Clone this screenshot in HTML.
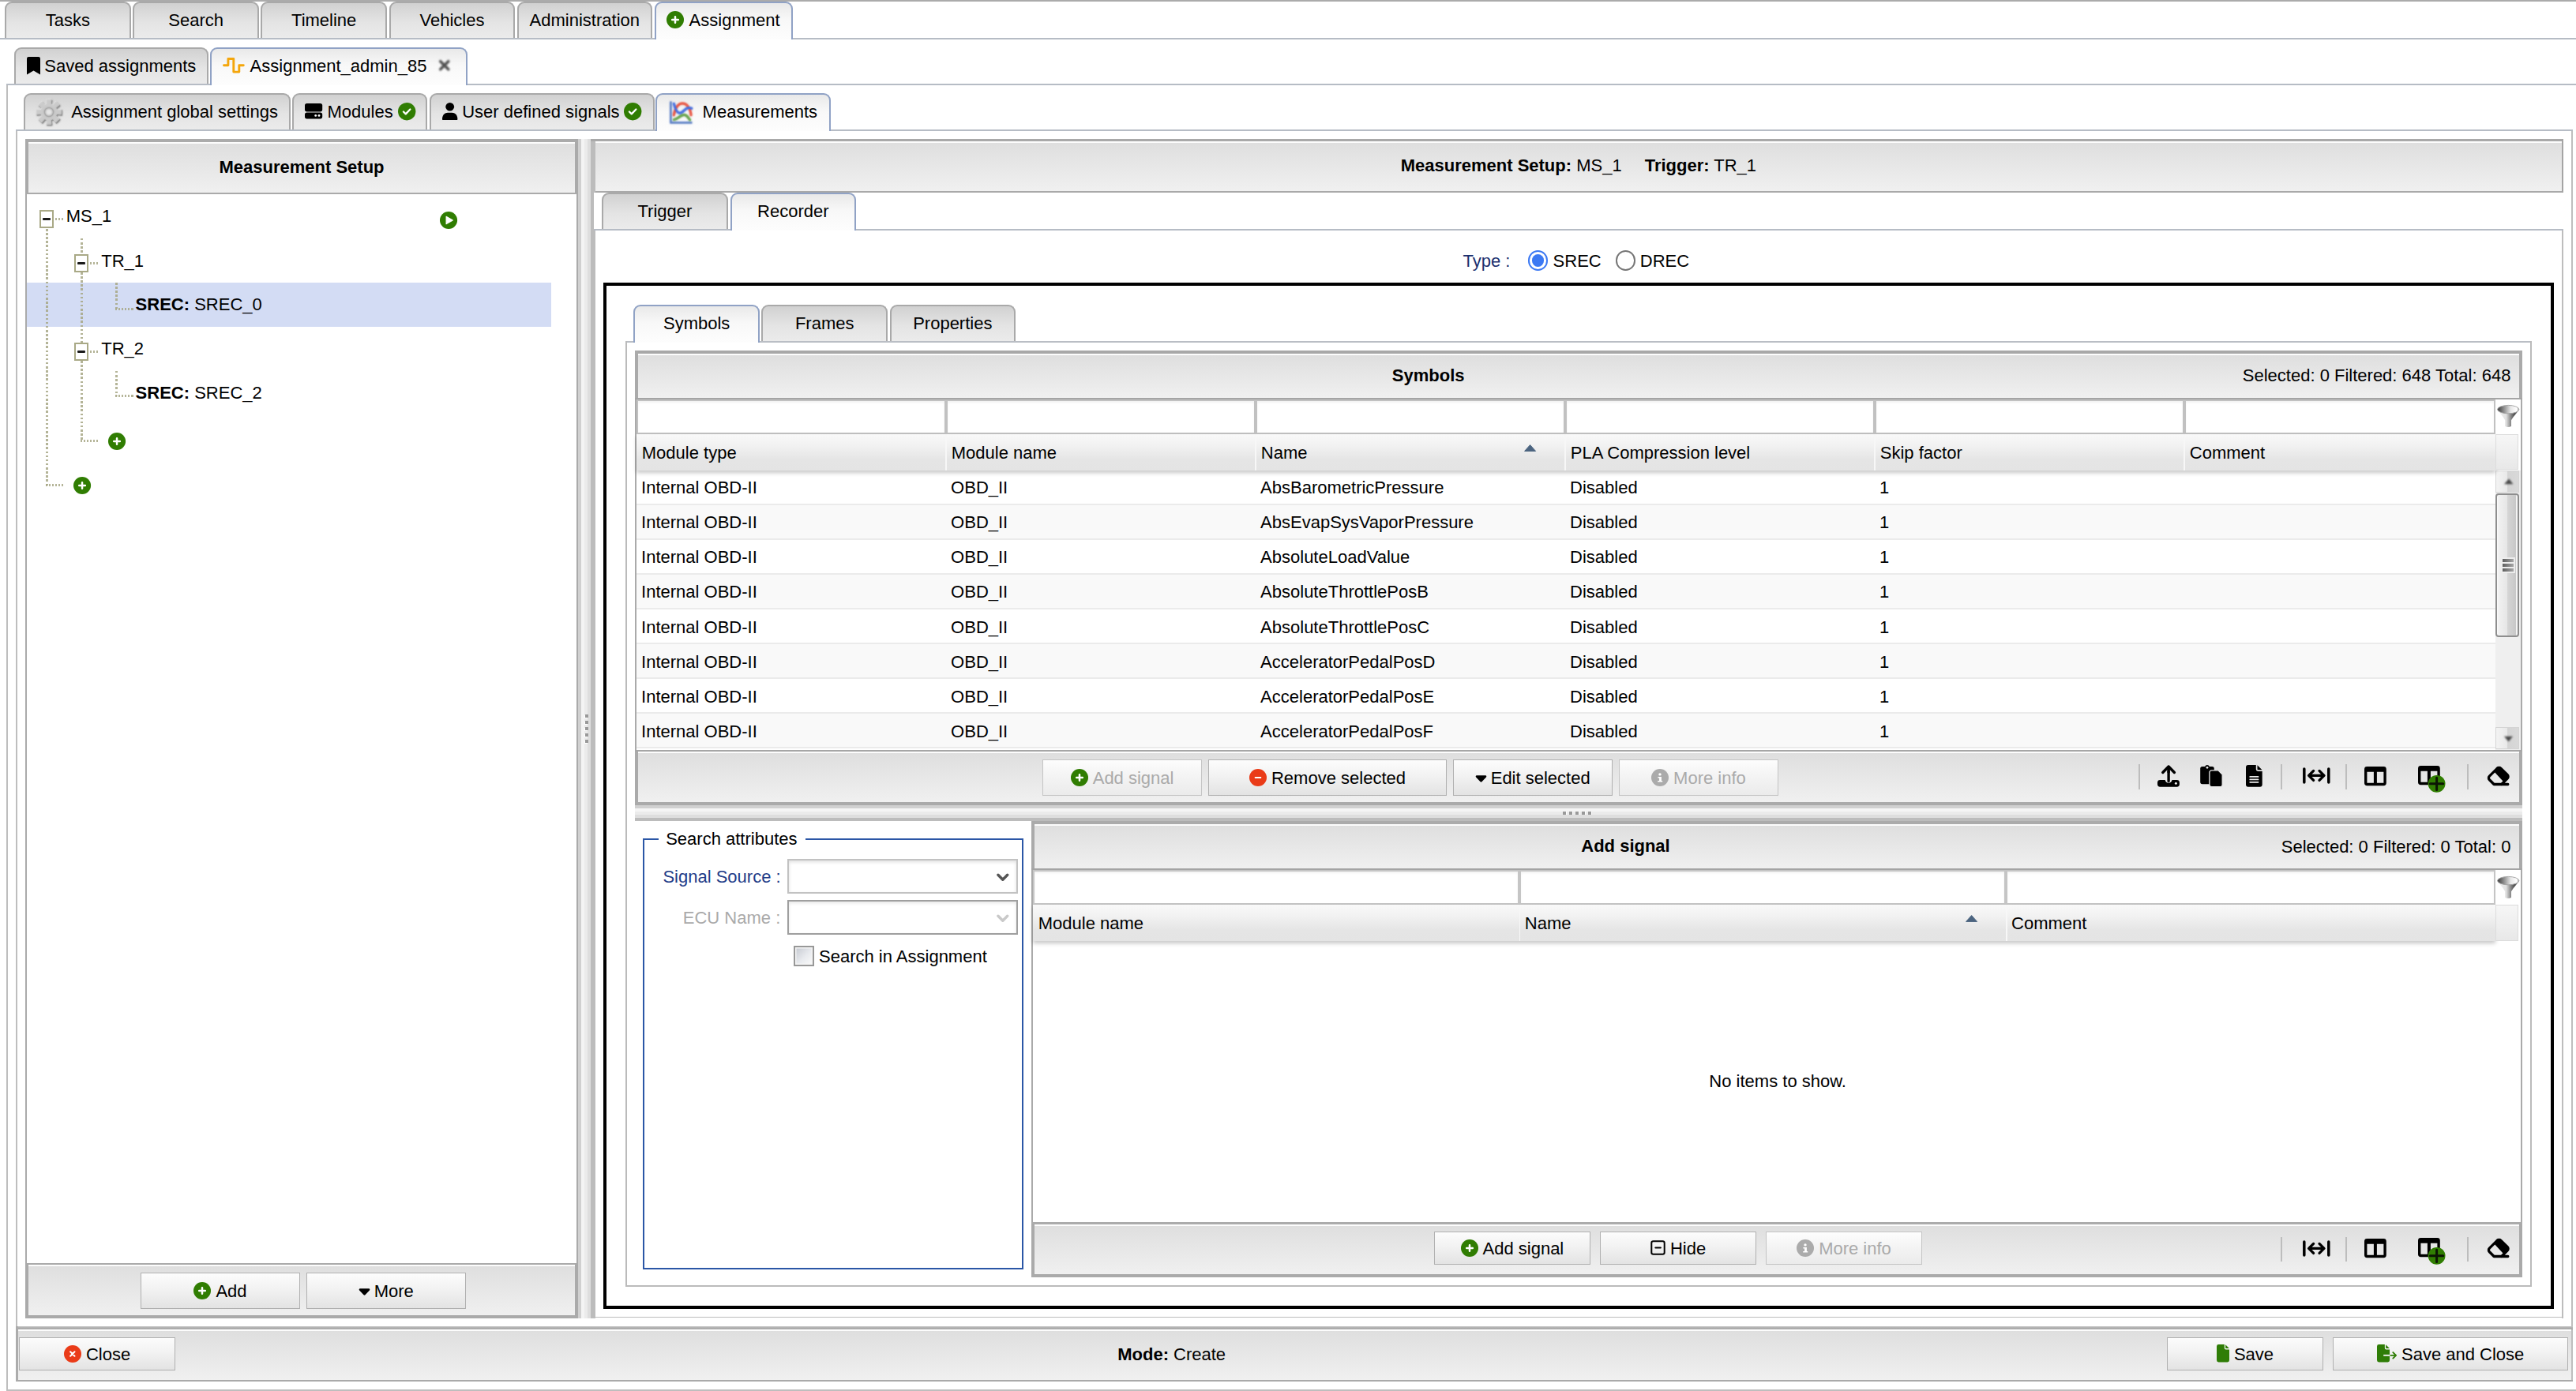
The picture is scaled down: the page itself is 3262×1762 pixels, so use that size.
<!DOCTYPE html>
<html><head><meta charset="utf-8"><title>Assignment</title>
<style>
html,body{margin:0;padding:0}
body{width:3262px;height:1762px;overflow:hidden;background:#fff;font-family:"Liberation Sans",sans-serif;font-size:22px;color:#000;position:relative}
.a{position:absolute;box-sizing:border-box}
svg{display:block;overflow:visible}
.tab{position:absolute;box-sizing:border-box;height:46px;border:2px solid #a9a9a9;border-bottom:none;border-radius:9px 9px 0 0;background:linear-gradient(#d1d1d1,#e4e4e4 55%,#ebebeb);white-space:nowrap}
.tab.on{height:48px;border-color:#90a2c5;background:linear-gradient(#e9e9e9,#f8f8f8 45%,#fdfdfd)}
.t{position:absolute;white-space:nowrap;line-height:26px;height:26px}
.b{font-weight:bold}
.ln{position:absolute;background:#b6bcc5}
.g{position:absolute;background:#aaaaaa}
.hdr{position:absolute;background:linear-gradient(#dedede,#e7e7e7 50%,#f0f0f0);box-shadow:inset 0 2px 0 #fcfcfc}
.btn{position:absolute;box-sizing:border-box;border:1px solid #b0b0b0;background:linear-gradient(#fcfcfc,#f2f2f2 45%,#e3e3e3);display:flex;align-items:center;justify-content:center;white-space:nowrap;line-height:26px}
.btn.dis{color:#aaaaaa;border-color:#c4c4c4;background:linear-gradient(#fdfdfd,#f4f4f4 45%,#ebebeb)}
.btn svg{flex:none;margin-right:6px}
.btn span{position:relative;top:1.2px}
.colh{position:absolute;background:linear-gradient(#f9f9f9,#f2f2f2 30%,#e5e5e5 70%,#e4e4e4);box-shadow:0 3px 5px rgba(0,0,0,.22)}
.fin{position:absolute;background:#fff;box-sizing:border-box;box-shadow:inset 0 2px 3px rgba(0,0,0,.05)}
.row{position:absolute;box-sizing:border-box;border-bottom:2px solid #ebebeb}
.dot{position:absolute}
</style></head>
<body>
<div class="a" style="left:0;top:0;width:3262px;height:2px;background:#ababab"></div><div class="ln" style="left:0;top:48px;width:3262px;height:2px"></div><div class="tab" style="left:6.2px;top:2px;width:159.6px"><div class="t" style="left:0;right:0;top:9px;text-align:center">Tasks</div></div><div class="tab" style="left:168.4px;top:2px;width:159.6px"><div class="t" style="left:0;right:0;top:9px;text-align:center">Search</div></div><div class="tab" style="left:330.4px;top:2px;width:159.6px"><div class="t" style="left:0;right:0;top:9px;text-align:center">Timeline</div></div><div class="tab" style="left:492.7px;top:2px;width:159.6px"><div class="t" style="left:0;right:0;top:9px;text-align:center">Vehicles</div></div><div class="tab" style="left:654.6px;top:2px;width:171.4px"><div class="t" style="left:0;right:0;top:9px;text-align:center">Administration</div></div><div class="tab on" style="left:828.8px;top:2px;width:175.2px"><svg class="a" style="left:13.4px;top:10.0px" width="22" height="22" viewBox="0 0 22 22"><circle cx="11" cy="11" r="11" fill="#307d02"/><path d="M11 7.200v7.600M7.200 11h7.600" stroke="#fff" stroke-width="2.500" stroke-linecap="round" fill="none"/></svg><div class="t" style="left:41.80000000000007px;top:9px">Assignment</div></div><div class="ln" style="left:8.3px;top:106.2px;width:3254px;height:2px"></div><div class="ln" style="left:8.3px;top:108px;width:2px;height:1654px;background:#bebebe"></div><div class="ln" style="left:8.3px;top:1759.8px;width:3254px;height:2.2px;background:#bebebe"></div><div class="tab" style="left:18.3px;top:60.3px;width:246.2px"><svg class="a" style="left:13.6px;top:9.3px" width="17" height="22.4" viewBox="0 0 17 22.4"><path d="M0 2.2Q0 0 2.2 0h12.6Q17 0 17 2.2V22.4L8.5 17.4 0 22.4z" fill="#000"/></svg><div class="t" style="left:36.0px;top:9px">Saved assignments</div></div><div class="tab on" style="left:266.3px;top:60.3px;width:325.4px"><svg class="a" style="left:13.5px;top:10.6px" width="28" height="19.7" viewBox="0 0 28 19.7"><path d="M1.500 9.700H6.900V1.500H13.800V18.100H20.800V9.700H26.300" fill="none" stroke="#f4a60c" stroke-width="2.900" stroke-linecap="round" stroke-linejoin="round"/></svg><div class="t" style="left:48.30000000000001px;top:9px">Assignment_admin_85</div><svg class="a" style="left:286.7px;top:13.0px" width="15.5" height="15.5" viewBox="0 0 15.5 15.5"><path d="M2.700 2.700l10.100 10.100M12.800 2.700L2.700 12.800" stroke="#505050" stroke-width="3.500" stroke-linecap="round" fill="none" style="filter:blur(.9px)"/></svg></div><div class="ln" style="left:20.3px;top:164px;width:3238px;height:2px"></div><div class="ln" style="left:20.3px;top:166px;width:2.2px;height:1584px;background:#bebebe"></div><div class="ln" style="left:3255.8px;top:166px;width:2.2px;height:1584px;background:#bebebe"></div><div class="tab" style="left:30.1px;top:118.4px;width:337.8px"><svg class="a" style="left:13.9px;top:6.1px" width="32" height="32" viewBox="0 0 32 32"><g style="filter:blur(.85px)"><path d="M13.62 6.08 L13.04 0.48 L18.96 0.48 L18.38 6.08 L21.33 7.30 L24.88 2.93 L29.07 7.12 L24.70 10.67 L25.92 13.62 L31.52 13.04 L31.52 18.96 L25.92 18.38 L24.70 21.33 L29.07 24.88 L24.88 29.07 L21.33 24.70 L18.38 25.92 L18.96 31.52 L13.04 31.52 L13.62 25.92 L10.67 24.70 L7.12 29.07 L2.93 24.88 L7.30 21.33 L6.08 18.38 L0.48 18.96 L0.48 13.04 L6.08 13.62 L7.30 10.67 L2.93 7.12 L7.12 2.93 L10.67 7.30Z" transform="translate(.8 1)" fill="#767676" stroke="#767676" stroke-width="1.4" stroke-linejoin="round"/><path d="M13.62 6.08 L13.04 0.48 L18.96 0.48 L18.38 6.08 L21.33 7.30 L24.88 2.93 L29.07 7.12 L24.70 10.67 L25.92 13.62 L31.52 13.04 L31.52 18.96 L25.92 18.38 L24.70 21.33 L29.07 24.88 L24.88 29.07 L21.33 24.70 L18.38 25.92 L18.96 31.52 L13.04 31.52 L13.62 25.92 L10.67 24.70 L7.12 29.07 L2.93 24.88 L7.30 21.33 L6.08 18.38 L0.48 18.96 L0.48 13.04 L6.08 13.62 L7.30 10.67 L2.93 7.12 L7.12 2.93 L10.67 7.30Z" transform="translate(-.4 -.5)" fill="#e6e6e6" stroke="#e6e6e6" stroke-width="1" stroke-linejoin="round"/><path d="M13.62 6.08 L13.04 0.48 L18.96 0.48 L18.38 6.08 L21.33 7.30 L24.88 2.93 L29.07 7.12 L24.70 10.67 L25.92 13.62 L31.52 13.04 L31.52 18.96 L25.92 18.38 L24.70 21.33 L29.07 24.88 L24.88 29.07 L21.33 24.70 L18.38 25.92 L18.96 31.52 L13.04 31.52 L13.62 25.92 L10.67 24.70 L7.12 29.07 L2.93 24.88 L7.30 21.33 L6.08 18.38 L0.48 18.96 L0.48 13.04 L6.08 13.62 L7.30 10.67 L2.93 7.12 L7.12 2.93 L10.67 7.30Z" fill="#cbcbcb" stroke="#cbcbcb" stroke-width=".8" stroke-linejoin="round"/><circle cx="16" cy="16" r="5.6" fill="#d2d2d2" stroke="#9c9c9c" stroke-width="1.5"/><circle cx="16" cy="16" r="3.3" fill="#e6e6e6"/></g><g opacity=".4"><path d="M13.62 6.08 L13.04 0.48 L18.96 0.48 L18.38 6.08 L21.33 7.30 L24.88 2.93 L29.07 7.12 L24.70 10.67 L25.92 13.62 L31.52 13.04 L31.52 18.96 L25.92 18.38 L24.70 21.33 L29.07 24.88 L24.88 29.07 L21.33 24.70 L18.38 25.92 L18.96 31.52 L13.04 31.52 L13.62 25.92 L10.67 24.70 L7.12 29.07 L2.93 24.88 L7.30 21.33 L6.08 18.38 L0.48 18.96 L0.48 13.04 L6.08 13.62 L7.30 10.67 L2.93 7.12 L7.12 2.93 L10.67 7.30Z" transform="translate(.8 1)" fill="#767676" stroke="#767676" stroke-width="1.4" stroke-linejoin="round"/><path d="M13.62 6.08 L13.04 0.48 L18.96 0.48 L18.38 6.08 L21.33 7.30 L24.88 2.93 L29.07 7.12 L24.70 10.67 L25.92 13.62 L31.52 13.04 L31.52 18.96 L25.92 18.38 L24.70 21.33 L29.07 24.88 L24.88 29.07 L21.33 24.70 L18.38 25.92 L18.96 31.52 L13.04 31.52 L13.62 25.92 L10.67 24.70 L7.12 29.07 L2.93 24.88 L7.30 21.33 L6.08 18.38 L0.48 18.96 L0.48 13.04 L6.08 13.62 L7.30 10.67 L2.93 7.12 L7.12 2.93 L10.67 7.30Z" transform="translate(-.4 -.5)" fill="#e6e6e6" stroke="#e6e6e6" stroke-width="1" stroke-linejoin="round"/><path d="M13.62 6.08 L13.04 0.48 L18.96 0.48 L18.38 6.08 L21.33 7.30 L24.88 2.93 L29.07 7.12 L24.70 10.67 L25.92 13.62 L31.52 13.04 L31.52 18.96 L25.92 18.38 L24.70 21.33 L29.07 24.88 L24.88 29.07 L21.33 24.70 L18.38 25.92 L18.96 31.52 L13.04 31.52 L13.62 25.92 L10.67 24.70 L7.12 29.07 L2.93 24.88 L7.30 21.33 L6.08 18.38 L0.48 18.96 L0.48 13.04 L6.08 13.62 L7.30 10.67 L2.93 7.12 L7.12 2.93 L10.67 7.30Z" fill="#cbcbcb" stroke="#cbcbcb" stroke-width=".8" stroke-linejoin="round"/><circle cx="16" cy="16" r="5.6" fill="#d2d2d2" stroke="#9c9c9c" stroke-width="1.5"/><circle cx="16" cy="16" r="3.3" fill="#e6e6e6"/></g></svg><div class="t" style="left:58.1px;top:9px">Assignment global settings</div></div><div class="tab" style="left:370.3px;top:118.4px;width:171.2px"><svg class="a" style="left:13.9px;top:10.7px" width="22.2" height="19.4" viewBox="0 0 22.2 19.4"><rect x="0" y="0" width="22.2" height="10.4" rx="2.6" fill="#000"/><rect x="0" y="11.4" width="22.2" height="8" rx="2.6" fill="#000"/><circle cx="13.7" cy="15.4" r="1.4" fill="#fff"/><circle cx="18" cy="15.4" r="1.4" fill="#fff"/></svg><div class="t" style="left:42.19999999999999px;top:9px">Modules</div><svg class="a" style="left:131.3px;top:9.2px" width="22.4" height="22.4" viewBox="0 0 22 22"><circle cx="11" cy="11" r="11" fill="#307d02"/><path d="M6.800 11.300l2.800 2.800 5.500-5.700" stroke="#fff" stroke-width="2.300" stroke-linecap="round" stroke-linejoin="round" fill="none"/></svg></div><div class="tab" style="left:544.4px;top:118.4px;width:284.2px"><svg class="a" style="left:13.5px;top:9.3px" width="19.4" height="22" viewBox="0 0 19.4 22.8" preserveAspectRatio="none"><circle cx="9.7" cy="5.4" r="5.4" fill="#000"/><path d="M0 21.8C0 16 3.2 13.2 7 13.2h5.4c3.8 0 7 2.8 7 8.6 0 .6-.4 1-1 1H1c-.6 0-1-.4-1-1z" fill="#000"/></svg><div class="t" style="left:38.80000000000007px;top:9px">User defined signals</div><svg class="a" style="left:244.1px;top:9.2px" width="22.4" height="22.4" viewBox="0 0 22 22"><circle cx="11" cy="11" r="11" fill="#307d02"/><path d="M6.800 11.300l2.800 2.800 5.500-5.700" stroke="#fff" stroke-width="2.300" stroke-linecap="round" stroke-linejoin="round" fill="none"/></svg></div><div class="tab on" style="left:830.2px;top:118.4px;width:221.6px"><svg class="a" style="left:15.4px;top:7.2px" width="29" height="28.5" viewBox="0 0 29 28.5"><g style="filter:blur(.85px)"><g fill="none" stroke-linecap="round"><path d="M5.300 17.900C6.500 9 10.800 3 16.100 3 21.600 3 26 8.500 27.100 17.700" stroke="#e8503c" stroke-width="3"/><path d="M5.300 3.200C6.500 8.200 9 15.200 12.700 15.200 17 15.200 19.500 8.800 24 8.400L27.800 9.300" stroke="#3f6ae0" stroke-width="3"/><path d="M5.400 23.400C10 23.400 13 17.600 18.400 17.600 22.500 17.600 23.500 22 25.700 23.800" stroke="#62a046" stroke-width="3"/><path d="M1.400 0.400V27.300H28.400" stroke="#4a72c0" stroke-width="2.200" stroke-linecap="butt" stroke-linejoin="miter"/></g></g><g opacity=".35"><g fill="none" stroke-linecap="round"><path d="M5.300 17.900C6.500 9 10.800 3 16.100 3 21.600 3 26 8.500 27.100 17.700" stroke="#e8503c" stroke-width="3"/><path d="M5.300 3.200C6.500 8.200 9 15.200 12.700 15.200 17 15.200 19.500 8.800 24 8.400L27.800 9.300" stroke="#3f6ae0" stroke-width="3"/><path d="M5.400 23.400C10 23.400 13 17.600 18.400 17.600 22.500 17.600 23.500 22 25.700 23.800" stroke="#62a046" stroke-width="3"/><path d="M1.400 0.400V27.300H28.400" stroke="#4a72c0" stroke-width="2.200" stroke-linecap="butt" stroke-linejoin="miter"/></g></g></svg><div class="t" style="left:57.39999999999998px;top:9px">Measurements</div></div>
<div class="g" style="left:32px;top:176px;width:700.2px;height:3.8px;background:#ababab"></div><div class="hdr" style="left:35.8px;top:179.8px;width:692.4px;height:64.2px"></div><div class="g" style="left:32px;top:176px;width:4px;height:70px"></div><div class="g" style="left:728.2px;top:176px;width:4px;height:70px"></div><div class="g" style="left:32px;top:244px;width:700.2px;height:2.2px"></div><div class="g" style="left:32px;top:246px;width:2.2px;height:1354px"></div><div class="g" style="left:730px;top:246px;width:2.2px;height:1354px"></div><div class="t b" style="left:36px;width:692px;top:198.6px;text-align:center">Measurement Setup</div><div class="a" style="left:34.2px;top:358.1px;width:663.8px;height:55.7px;background:#d3dcf4"></div><div class="dot" style="left:57.7px;top:290px;width:3px;height:325.4px;background:repeating-linear-gradient(to bottom,#a7a785 0,#a7a785 2.5px,transparent 2.5px,transparent 5.12px);opacity:.85"></div><div class="dot" style="left:57.7px;top:612.7px;height:3px;width:22.5px;background:repeating-linear-gradient(to right,#a7a785 0,#a7a785 2.3px,transparent 2.3px,transparent 4.04px);opacity:.85"></div><div class="dot" style="left:101.6px;top:302px;width:3px;height:20.5px;background:repeating-linear-gradient(to bottom,#a7a785 0,#a7a785 2.5px,transparent 2.5px,transparent 5.12px);opacity:.85"></div><div class="dot" style="left:101.6px;top:345.2px;width:3px;height:89.4px;background:repeating-linear-gradient(to bottom,#a7a785 0,#a7a785 2.5px,transparent 2.5px,transparent 5.12px);opacity:.85"></div><div class="dot" style="left:101.6px;top:457.2px;width:3px;height:102.0px;background:repeating-linear-gradient(to bottom,#a7a785 0,#a7a785 2.5px,transparent 2.5px,transparent 5.12px);opacity:.85"></div><div class="dot" style="left:101.6px;top:556.5px;height:3px;width:23.0px;background:repeating-linear-gradient(to right,#a7a785 0,#a7a785 2.3px,transparent 2.3px,transparent 4.04px);opacity:.85"></div><div class="dot" style="left:145.7px;top:358.2px;width:3px;height:34.4px;background:repeating-linear-gradient(to bottom,#a7a785 0,#a7a785 2.5px,transparent 2.5px,transparent 5.12px);opacity:.85"></div><div class="dot" style="left:145.7px;top:390px;height:3px;width:23.1px;background:repeating-linear-gradient(to right,#a7a785 0,#a7a785 2.3px,transparent 2.3px,transparent 4.04px);opacity:.85"></div><div class="dot" style="left:145.7px;top:470.3px;width:3px;height:32.0px;background:repeating-linear-gradient(to bottom,#a7a785 0,#a7a785 2.5px,transparent 2.5px,transparent 5.12px);opacity:.85"></div><div class="dot" style="left:145.7px;top:499.8px;height:3px;width:23.1px;background:repeating-linear-gradient(to right,#a7a785 0,#a7a785 2.3px,transparent 2.3px,transparent 4.04px);opacity:.85"></div><div class="dot" style="left:69.8px;top:276.2px;height:3px;width:10.4px;background:repeating-linear-gradient(to right,#a7a785 0,#a7a785 2.3px,transparent 2.3px,transparent 4.04px);opacity:.85"></div><div class="dot" style="left:113.8px;top:332.2px;height:3px;width:10.6px;background:repeating-linear-gradient(to right,#a7a785 0,#a7a785 2.3px,transparent 2.3px,transparent 4.04px);opacity:.85"></div><div class="dot" style="left:113.8px;top:444.2px;height:3px;width:10.6px;background:repeating-linear-gradient(to right,#a7a785 0,#a7a785 2.3px,transparent 2.3px,transparent 4.04px);opacity:.85"></div><div class="a" style="left:50px;top:266.3px;width:18px;height:23.2px;border:2.4px solid #a9a986;background:#fff"></div><div class="a" style="left:54.2px;top:275.7px;width:9.6px;height:3.4px;background:#1a1a1a;border-radius:1px"></div><div class="a" style="left:94px;top:322.1px;width:18px;height:23.2px;border:2.4px solid #a9a986;background:#fff"></div><div class="a" style="left:98.2px;top:331.5px;width:9.6px;height:3.4px;background:#1a1a1a;border-radius:1px"></div><div class="a" style="left:94px;top:434.2px;width:18px;height:23.2px;border:2.4px solid #a9a986;background:#fff"></div><div class="a" style="left:98.2px;top:443.59999999999997px;width:9.6px;height:3.4px;background:#1a1a1a;border-radius:1px"></div><div class="t" style="left:83.8px;top:261.4px">MS_1</div><div class="t" style="left:128.3px;top:317.5px">TR_1</div><div class="t" style="left:171.6px;top:373.3px"><b>SREC:</b> SREC_0</div><div class="t" style="left:128.3px;top:429.4px">TR_2</div><div class="t" style="left:171.6px;top:485.0px"><b>SREC:</b> SREC_2</div><svg class="a" style="left:557px;top:267.6px" width="22.1" height="22.1" viewBox="0 0 22 22" ><circle cx="11" cy="11" r="11" fill="#307d02"/><path d="M8 6.2v9.6l8.3-4.8z" fill="#fff" stroke="#fff" stroke-width="1" stroke-linejoin="round"/></svg><svg class="a" style="left:137.1px;top:547.9px" width="22.1" height="22.1" viewBox="0 0 22 22" ><circle cx="11" cy="11" r="11" fill="#307d02"/><path d="M11 7.200v7.600M7.200 11h7.600" stroke="#fff" stroke-width="2.500" stroke-linecap="round" fill="none"/></svg><svg class="a" style="left:92.8px;top:603.6px" width="22.1" height="22.1" viewBox="0 0 22 22" ><circle cx="11" cy="11" r="11" fill="#307d02"/><path d="M11 7.200v7.600M7.200 11h7.600" stroke="#fff" stroke-width="2.500" stroke-linecap="round" fill="none"/></svg><div class="g" style="left:32px;top:1600px;width:700.2px;height:2px"></div><div class="hdr" style="left:35.8px;top:1602px;width:692.4px;height:63.8px"></div><div class="g" style="left:32px;top:1599.6px;width:4px;height:69.8px"></div><div class="g" style="left:728.2px;top:1599.6px;width:4px;height:69.8px"></div><div class="g" style="left:32px;top:1665.8px;width:700.2px;height:4px"></div><div class="btn" style="left:178px;top:1612.3px;width:202px;height:45.8px"><svg width="22" height="22" viewBox="0 0 22 22" style=""><circle cx="11" cy="11" r="11" fill="#307d02"/><path d="M11 7.200v7.600M7.200 11h7.600" stroke="#fff" stroke-width="2.500" stroke-linecap="round" fill="none"/></svg><span>Add</span></div><div class="btn" style="left:388px;top:1612.3px;width:202px;height:45.8px"><svg width="15" height="9" viewBox="0 0 15 9" style="margin-top:2.600px;margin-right:4.600px"><path d="M2 1.500h11l-5.500 5.800z" fill="#000" stroke="#000" stroke-width="2.600" stroke-linejoin="round"/></svg><span>More</span></div><div class="a" style="left:732.1px;top:176px;width:15.9px;height:1493.5px;background:linear-gradient(to right,#d0d0d0 0,#d0d0d0 3.5px,#f4f4f4 4px,#f4f4f4 7.8px,#ebebeb 8.2px,#ebebeb 11.9px,#dedede 12.3px,#dedede 100%)"></div><div class="a" style="left:740.2px;top:905.6px;width:4px;height:4px;background:#fff"></div><div class="a" style="left:741px;top:904.9px;width:4px;height:3.9px;background:#999"></div><div class="a" style="left:740.2px;top:913.6px;width:4px;height:4px;background:#fff"></div><div class="a" style="left:741px;top:912.9px;width:4px;height:3.9px;background:#999"></div><div class="a" style="left:740.2px;top:921.6px;width:4px;height:4px;background:#fff"></div><div class="a" style="left:741px;top:920.9px;width:4px;height:3.9px;background:#999"></div><div class="a" style="left:740.2px;top:929.6px;width:4px;height:4px;background:#fff"></div><div class="a" style="left:741px;top:928.9px;width:4px;height:3.9px;background:#999"></div><div class="a" style="left:740.2px;top:937.6px;width:4px;height:4px;background:#fff"></div><div class="a" style="left:741px;top:936.9px;width:4px;height:3.9px;background:#999"></div>
<div class="a" style="left:747.9px;top:176px;width:6px;height:1493.5px;background:#bcbcbc"></div><div class="hdr" style="left:753.9px;top:178.5px;width:2489.7px;height:63.6px"></div><div class="g" style="left:747.9px;top:176px;width:2498px;height:2.8px;background:#a9a9a9"></div><div class="g" style="left:753.9px;top:242px;width:2492px;height:2px;background:#a9a9a9"></div><div class="a" style="left:752px;top:244px;width:2px;height:46px;background:#fff"></div><div class="g" style="left:3243.6px;top:176px;width:2.4px;height:68px;background:#a4a4a4"></div><div class="t" style="left:753.9px;width:2490px;top:196.5px;text-align:center;word-spacing:0"><b>Measurement Setup:</b> MS_1<span style="display:inline-block;width:29px"></span><b>Trigger:</b> TR_1</div><div class="ln" style="left:3244px;top:290px;width:2px;height:1379.5px;background:#bdbdbd"></div><div class="ln" style="left:753.9px;top:1667.6px;width:2492px;height:1.9px;background:#bdbdbd"></div><div class="ln" style="left:752px;top:290px;width:2494px;height:2px"></div><div class="tab" style="left:762.1px;top:243.9px;width:159.7px"><div class="t" style="left:0;right:0;top:9.299999999999999px;text-align:center">Trigger</div></div><div class="tab on" style="left:924.6px;top:243.9px;width:159.4px"><div class="t" style="left:0;right:0;top:9.299999999999999px;text-align:center">Recorder</div></div><div class="t" style="left:1852.5px;top:317.6px;color:#1b2f6e">Type :</div><div class="a" style="left:1934.8px;top:317.2px;width:25.6px;height:25.6px;border-radius:50%;border:2.2px solid #3c79f3;background:#fff"></div><div class="a" style="left:1939.7px;top:322.1px;width:15.8px;height:15.8px;border-radius:50%;background:#3c79f3"></div><div class="t" style="left:1966.6px;top:317.6px">SREC</div><div class="a" style="left:2045.9px;top:317.2px;width:25.6px;height:25.6px;border-radius:50%;border:2.2px solid #767676;background:#fff"></div><div class="t" style="left:2076.8px;top:317.6px">DREC</div><div class="a" style="left:764.1px;top:358.1px;width:2469.9px;height:1300.1px;border:4px solid #000"></div><div class="ln" style="left:792.2px;top:432.2px;width:2413.8px;height:2px;background:#babec5"></div><div class="ln" style="left:792.2px;top:432.2px;width:2px;height:1197.8px;background:#bbb"></div><div class="ln" style="left:3204px;top:432.2px;width:2px;height:1197.8px;background:#bbb"></div><div class="ln" style="left:792.2px;top:1628px;width:2413.8px;height:2px;background:#bbb"></div><div class="tab on" style="left:802.4px;top:386.4px;width:159.6px"><div class="t" style="left:0;right:0;top:8.6px;text-align:center">Symbols</div></div><div class="tab" style="left:964.4px;top:386.4px;width:159.6px"><div class="t" style="left:0;right:0;top:8.6px;text-align:center">Frames</div></div><div class="tab" style="left:1126.5px;top:386.4px;width:159.6px"><div class="t" style="left:0;right:0;top:8.6px;text-align:center">Properties</div></div>
<div class="g" style="left:804px;top:444px;width:2389.8px;height:4px;background:#a8a8a8"></div><div class="hdr" style="left:808.2px;top:448px;width:2381.4px;height:56px"></div><div class="g" style="left:804px;top:444px;width:4.2px;height:576px"></div><div class="g" style="left:3189.6px;top:444px;width:4.2px;height:576px"></div><div class="g" style="left:804px;top:504px;width:2389.8px;height:2px;background:#a4a4a4"></div><div class="t b" style="left:808.2px;width:2001px;top:462.5px;text-align:center">Symbols</div><div class="t" style="right:82.6px;top:462.7px">Selected: 0 Filtered: 648 Total: 648</div><div class="a" style="left:806.2px;top:506px;width:2385.8px;height:444px;background:#fff"></div><div class="a" style="left:806.2px;top:506px;width:2353.6px;height:43.7px;background:#c1c1c1"></div><div class="fin" style="left:808.20px;top:507.8px;width:387.95px;height:40.3px"></div><div class="fin" style="left:1199.85px;top:507.8px;width:388.30px;height:40.3px"></div><div class="fin" style="left:1591.85px;top:507.8px;width:388.30px;height:40.3px"></div><div class="fin" style="left:1983.85px;top:507.8px;width:388.30px;height:40.3px"></div><div class="fin" style="left:2375.85px;top:507.8px;width:388.30px;height:40.3px"></div><div class="fin" style="left:2767.85px;top:507.8px;width:390.25px;height:40.3px"></div><svg class="a" style="left:3161.9px;top:513.4px" width="28.4" height="29" viewBox="0 0 28.4 29"><defs><linearGradient id="f513a" x1="0" y1="0" x2="1" y2="0"><stop offset="0" stop-color="#3c3c3c"/><stop offset=".3" stop-color="#8e8e8e"/><stop offset=".62" stop-color="#e8e8e8"/><stop offset=".9" stop-color="#ffffff"/><stop offset="1" stop-color="#9a9a9a"/></linearGradient><linearGradient id="f513b" x1="0" y1="0" x2="1" y2="0"><stop offset="0" stop-color="#f4f4f4"/><stop offset=".4" stop-color="#e0e0e0"/><stop offset=".62" stop-color="#8a8a8a"/><stop offset=".8" stop-color="#4e4e4e"/><stop offset="1" stop-color="#8a8a8a"/></linearGradient></defs><g style="filter:blur(.7px)"><path d="M1 6.5C3 10 7.500 14 10.200 19.200V27Q14 29 18 27V19.200C21 14 25.500 10 27.400 6.500Z" fill="url(#f513b)"/><ellipse cx="14.200" cy="5.600" rx="13.600" ry="5.200" fill="url(#f513a)" stroke="#a0a0a0" stroke-width=".9"/></g></svg><div class="row" style="left:806.2px;top:595.9px;width:2354px;height:44.05px;background:#fff"></div><div class="row" style="left:806.2px;top:639.9px;width:2354px;height:44.05px;background:#f9f9f9"></div><div class="row" style="left:806.2px;top:684.0px;width:2354px;height:44.05px;background:#fff"></div><div class="row" style="left:806.2px;top:728.0px;width:2354px;height:44.05px;background:#f9f9f9"></div><div class="row" style="left:806.2px;top:772.1px;width:2354px;height:44.05px;background:#fff"></div><div class="row" style="left:806.2px;top:816.1px;width:2354px;height:44.05px;background:#f9f9f9"></div><div class="row" style="left:806.2px;top:860.2px;width:2354px;height:44.05px;background:#fff"></div><div class="row" style="left:806.2px;top:904.2px;width:2354px;height:44.05px;background:#f9f9f9"></div><div class="t" style="left:812.1px;top:605.3px">Internal OBD-II</div><div class="t" style="left:1204.1px;top:605.3px">OBD_II</div><div class="t" style="left:1596.1px;top:605.3px">AbsBarometricPressure</div><div class="t" style="left:1988.1px;top:605.3px">Disabled</div><div class="t" style="left:2380.1px;top:605.3px">1</div><div class="t" style="left:812.1px;top:649.3px">Internal OBD-II</div><div class="t" style="left:1204.1px;top:649.3px">OBD_II</div><div class="t" style="left:1596.1px;top:649.3px">AbsEvapSysVaporPressure</div><div class="t" style="left:1988.1px;top:649.3px">Disabled</div><div class="t" style="left:2380.1px;top:649.3px">1</div><div class="t" style="left:812.1px;top:693.4px">Internal OBD-II</div><div class="t" style="left:1204.1px;top:693.4px">OBD_II</div><div class="t" style="left:1596.1px;top:693.4px">AbsoluteLoadValue</div><div class="t" style="left:1988.1px;top:693.4px">Disabled</div><div class="t" style="left:2380.1px;top:693.4px">1</div><div class="t" style="left:812.1px;top:737.4px">Internal OBD-II</div><div class="t" style="left:1204.1px;top:737.4px">OBD_II</div><div class="t" style="left:1596.1px;top:737.4px">AbsoluteThrottlePosB</div><div class="t" style="left:1988.1px;top:737.4px">Disabled</div><div class="t" style="left:2380.1px;top:737.4px">1</div><div class="t" style="left:812.1px;top:781.5px">Internal OBD-II</div><div class="t" style="left:1204.1px;top:781.5px">OBD_II</div><div class="t" style="left:1596.1px;top:781.5px">AbsoluteThrottlePosC</div><div class="t" style="left:1988.1px;top:781.5px">Disabled</div><div class="t" style="left:2380.1px;top:781.5px">1</div><div class="t" style="left:812.1px;top:825.5px">Internal OBD-II</div><div class="t" style="left:1204.1px;top:825.5px">OBD_II</div><div class="t" style="left:1596.1px;top:825.5px">AcceleratorPedalPosD</div><div class="t" style="left:1988.1px;top:825.5px">Disabled</div><div class="t" style="left:2380.1px;top:825.5px">1</div><div class="t" style="left:812.1px;top:869.6px">Internal OBD-II</div><div class="t" style="left:1204.1px;top:869.6px">OBD_II</div><div class="t" style="left:1596.1px;top:869.6px">AcceleratorPedalPosE</div><div class="t" style="left:1988.1px;top:869.6px">Disabled</div><div class="t" style="left:2380.1px;top:869.6px">1</div><div class="t" style="left:812.1px;top:913.6px">Internal OBD-II</div><div class="t" style="left:1204.1px;top:913.6px">OBD_II</div><div class="t" style="left:1596.1px;top:913.6px">AcceleratorPedalPosF</div><div class="t" style="left:1988.1px;top:913.6px">Disabled</div><div class="t" style="left:2380.1px;top:913.6px">1</div><div class="a" style="left:3160.2px;top:596px;width:31.8px;height:354px;background:#efefef"></div><div class="a" style="left:3160.2px;top:596.2px;width:29.4px;height:27.6px;border:1px solid #d4d4d4;background:linear-gradient(to right,#f3f3f3,#e9e9e9 48%,#d4d4d4 52%,#d9d9d9);box-sizing:border-box"></div><svg class="a" style="left:3170px;top:605.6px" width="13" height="8" viewBox="0 0 13 8"><path d="M7.200 .6L12.400 7.200H1z" fill="#4a4a4a" style="filter:blur(1px)"/></svg><div class="a" style="left:3160.2px;top:625px;width:29.6px;height:182.4px;border:2px solid #8e8e8e;border-radius:4px;background:linear-gradient(to right,#fafafa 0,#fafafa 1.1px,#f1f1f1 1.6px,#e6e6e6 12.8px,#d6d6d6 13.100px,#c7c7c7 24px,#f4f4f4 24.400px,#f4f4f4 100%);box-sizing:border-box"></div><div class="a" style="left:3165.3px;top:706px;width:19.6px;height:20px;background:#efefef;opacity:.92"></div><div class="a" style="left:3168.9px;top:708.0px;width:14px;height:3.6px;background:linear-gradient(to right,#5e5e5e,#8a8a8a 60%,#a6a6a6);filter:blur(.5px)"></div><div class="a" style="left:3168.9px;top:714.2px;width:14px;height:3.6px;background:linear-gradient(to right,#5e5e5e,#8a8a8a 60%,#a6a6a6);filter:blur(.5px)"></div><div class="a" style="left:3168.9px;top:720.4px;width:14px;height:3.6px;background:linear-gradient(to right,#5e5e5e,#8a8a8a 60%,#a6a6a6);filter:blur(.5px)"></div><div class="a" style="left:3160.2px;top:920.8px;width:29.4px;height:28.6px;border:1px solid #d4d4d4;background:linear-gradient(to right,#f3f3f3,#e9e9e9 48%,#d4d4d4 52%,#d9d9d9);box-sizing:border-box"></div><svg class="a" style="left:3170px;top:931.6px" width="13" height="8" viewBox="0 0 13 8"><path d="M6.600 7.400L12 .8H1z" fill="#4a4a4a" style="filter:blur(1px)"/></svg><div class="colh" style="left:806.2px;top:550px;width:2354px;height:45.6px"></div><div class="a" style="left:3160.2px;top:550px;width:29.2px;height:45.4px;background:linear-gradient(#f6f6f6,#e8e8e8);border:1px solid #dcdcdc;box-sizing:border-box"></div><div class="t" style="left:812.8px;top:561.4px">Module type</div><div class="a" style="left:1197.4px;top:550px;width:1.6px;height:45.6px;background:#f7f7f7"></div><div class="t" style="left:1204.8px;top:561.4px">Module name</div><div class="a" style="left:1589.4px;top:550px;width:1.6px;height:45.6px;background:#f7f7f7"></div><div class="t" style="left:1596.8px;top:561.4px">Name</div><div class="a" style="left:1981.4px;top:550px;width:1.6px;height:45.6px;background:#f7f7f7"></div><div class="t" style="left:1988.8px;top:561.4px">PLA Compression level</div><div class="a" style="left:2373.4px;top:550px;width:1.6px;height:45.6px;background:#f7f7f7"></div><div class="t" style="left:2380.8px;top:561.4px">Skip factor</div><div class="a" style="left:2765.4px;top:550px;width:1.6px;height:45.6px;background:#f7f7f7"></div><div class="t" style="left:2772.8px;top:561.4px">Comment</div><svg class="a" style="left:1930.4px;top:562.6px" width="15.2" height="9" viewBox="0 0 15.2 9"><path d="M7.600 .6L14.600 8.400H.6z" fill="#4b6480" stroke="#4b6480" stroke-width="1" stroke-linejoin="round"/></svg><div class="g" style="left:804px;top:950.1px;width:2389.8px;height:2px;background:#a6a6a6"></div><div class="hdr" style="left:808px;top:952.1px;width:2381.8px;height:64px"></div><div class="g" style="left:804px;top:1016px;width:2389.8px;height:4px;background:#aaa"></div><div class="btn dis" style="left:1320.2px;top:962.2px;width:201.8px;height:45.6px"><svg width="22" height="22" viewBox="0 0 22 22" style=""><circle cx="11" cy="11" r="11" fill="#307d02"/><path d="M11 7.200v7.600M7.200 11h7.600" stroke="#fff" stroke-width="2.500" stroke-linecap="round" fill="none"/></svg><span>Add signal</span></div><div class="btn" style="left:1530.2px;top:962.2px;width:301.6px;height:45.6px"><svg width="22" height="22" viewBox="0 0 22 22" style=""><circle cx="11" cy="11" r="11" fill="#ea3b18"/><rect x="6.850" y="9.900" width="8.300" height="2.200" rx=".7" fill="#fff"/></svg><span>Remove selected</span></div><div class="btn" style="left:1840px;top:962.2px;width:201.8px;height:45.6px"><svg width="15" height="9" viewBox="0 0 15 9" style="margin-top:2.600px;margin-right:4.600px"><path d="M2 1.500h11l-5.500 5.800z" fill="#000" stroke="#000" stroke-width="2.600" stroke-linejoin="round"/></svg><span>Edit selected</span></div><div class="btn dis" style="left:2050px;top:962.2px;width:201.9px;height:45.6px"><svg width="22" height="22" viewBox="0 0 22 22" style=""><circle cx="11" cy="11" r="11" fill="#ababab"/><circle cx="11" cy="6.900" r="1.700" fill="#fff"/><path d="M8.400 9.900h4.500v5h1.300v1.600H8.200v-1.600h1.900v-3.400H8.400z" fill="#fff"/></svg><span>More info</span></div><div class="a" style="left:2707.8px;top:968.0px;width:2.5px;height:31.6px;background:#bdbdbd"></div><svg class="a" style="left:2732.0px;top:968.8px" width="28" height="28" viewBox="0 0 28 28"><path d="M14.100 2V21.300M6.800 9.500L14.100 2l7.300 7.500" fill="none" stroke="#000" stroke-width="3.400" stroke-linecap="round" stroke-linejoin="round"/><path d="M3.400 18.900H9.700a4.500 4.500 0 0 0 8.800 0H24.500a3.400 3.400 0 0 1 3.400 3.400v2a3.400 3.400 0 0 1-3.400 3.400H3.400A3.400 3.400 0 0 1 0 24.300v-2a3.400 3.400 0 0 1 3.400-3.400z" fill="#000"/><path d="M14.100 12.500V19.700" stroke="#e9e9e9" stroke-width="5.800" stroke-linecap="round" fill="none"/><path d="M14.100 8V20.400" stroke="#000" stroke-width="3.400" stroke-linecap="round" fill="none"/><circle cx="23.400" cy="23.300" r="1.500" fill="#ececec"/></svg><svg class="a" style="left:2785.7px;top:968.8px" width="28.4" height="27.9" viewBox="0 0 28.4 27.9"><path d="M2.800 1.900H6.200a3 3 0 0 1 5.600 0H15.200a2.600 2.600 0 0 1 2.600 2.600V21.600a2.600 2.600 0 0 1-2.600 2.600H2.800A2.600 2.600 0 0 1 .2 21.600V4.500A2.600 2.600 0 0 1 2.800 1.900z" fill="#000"/><circle cx="9" cy="3.300" r="1.350" fill="#ececec"/><path d="M14.600 6.800H23l5.200 5.200V25a2.700 2.700 0 0 1-2.700 2.700H14.600A2.700 2.700 0 0 1 11.900 25V9.500a2.700 2.700 0 0 1 2.700-2.700z" fill="#000" stroke="#e9e9e9" stroke-width="1.300"/></svg><svg class="a" style="left:2843.7px;top:968.9px" width="20.7" height="27.7" viewBox="0 0 20.7 27.7"><path d="M2.900 0H12.800V5.400a2.500 2.500 0 0 0 2.500 2.500H20.700V24.800a2.900 2.900 0 0 1-2.900 2.900H2.900A2.900 2.900 0 0 1 0 24.800V2.900A2.900 2.900 0 0 1 2.900 0z" fill="#000"/><path d="M14.500 0.200L20.500 6.200H15.400a.9.900 0 0 1-.9-.9z" fill="#000"/><path d="M5.200 14.900h10.400M5.200 18.400h10.400M5.200 21.800h10.400" stroke="#ececec" stroke-width="1.700" stroke-linecap="round" fill="none"/></svg><div class="a" style="left:2887.7px;top:968.0px;width:2.5px;height:31.6px;background:#bdbdbd"></div><svg class="a" style="left:2915.8px;top:971.3px" width="34.6" height="22.9" viewBox="0 0 34.6 22.9"><path d="M1.800 2.900V20M32.800 2.900V20" stroke="#000" stroke-width="3.500" stroke-linecap="round" fill="none"/><path d="M8 11.400H26.600M13.600 5.400L7.600 11.400l6 6M21 5.400l6 6-6 6" stroke="#000" stroke-width="3.300" stroke-linecap="round" stroke-linejoin="round" fill="none"/></svg><div class="a" style="left:2969.7px;top:968.0px;width:2.5px;height:31.6px;background:#bdbdbd"></div><svg class="a" style="left:2994.1px;top:970.6px" width="27.8" height="24.2" viewBox="0 0 27.8 24.2"><path fill-rule="evenodd" d="M3.400 0H24.400a3.400 3.400 0 0 1 3.400 3.400V20.800a3.400 3.400 0 0 1-3.400 3.400H3.400A3.400 3.400 0 0 1 0 20.800V3.400A3.400 3.400 0 0 1 3.400 0zM3.400 6.800V20.800H11.900V6.800zM15.900 6.800V20.800H24.400V6.800z" fill="#000"/></svg><svg class="a" style="left:3062.2px;top:969.7px" width="27.8" height="24.2" viewBox="0 0 27.8 24.2"><path fill-rule="evenodd" d="M3.400 0H24.400a3.400 3.400 0 0 1 3.400 3.400V20.800a3.400 3.400 0 0 1-3.400 3.400H3.400A3.400 3.400 0 0 1 0 20.800V3.400A3.400 3.400 0 0 1 3.400 0zM3.400 6.800V20.800H11.900V6.800zM15.900 6.800V20.800H24.400V6.800z" fill="#000"/><circle cx="23.600" cy="22.800" r="10.900" fill="#307d02"/><path d="M23.600 15.200V30.400M15.400 22.800H31.800" stroke="#0b1503" stroke-width="3" stroke-linecap="round" fill="none"/></svg><div class="a" style="left:3123.7px;top:968.0px;width:2.5px;height:31.6px;background:#bdbdbd"></div><svg class="a" style="left:3149.9px;top:970.7px" width="27.6" height="24.3" viewBox="0 0 27.6 24.3"><path d="M12.200 2.300a3.300 3.300 0 0 1 4.700 0l8.200 8.200a3.300 3.300 0 0 1 0 4.700L17.800 22.500H25.800" fill="none" stroke="#000" stroke-width="3.300" stroke-linecap="round" stroke-linejoin="round"/><path d="M12.200 2.300L2.400 12.100a3.300 3.300 0 0 0 0 4.700L8.100 22.500H17.800" fill="none" stroke="#000" stroke-width="3.300" stroke-linecap="round" stroke-linejoin="round"/><path d="M8.200 6.300L12.200 2.300a3.300 3.300 0 0 1 4.700 0l8.200 8.200a3.300 3.300 0 0 1 0 4.700L20.400 19.500z" fill="#000"/></svg><div class="a" style="left:804px;top:1020px;width:2389.8px;height:16px;background:linear-gradient(#d0d0d0 0,#d0d0d0 3.8px,#f5f5f5 4px,#f5f5f5 8px,#ebebeb 8.2px,#ebebeb 12px,#dedede 12.200px,#dedede 100%)"></div><div class="a" style="left:804px;top:1036px;width:2389.8px;height:4px;background:#bcbcbc"></div><div class="a" style="left:1979.5px;top:1028.4px;width:4px;height:4px;background:#fff"></div><div class="a" style="left:1978.8px;top:1027.6px;width:3.9px;height:4px;background:#999"></div><div class="a" style="left:1987.5px;top:1028.4px;width:4px;height:4px;background:#fff"></div><div class="a" style="left:1986.8px;top:1027.6px;width:3.9px;height:4px;background:#999"></div><div class="a" style="left:1995.5px;top:1028.4px;width:4px;height:4px;background:#fff"></div><div class="a" style="left:1994.8px;top:1027.6px;width:3.9px;height:4px;background:#999"></div><div class="a" style="left:2003.5px;top:1028.4px;width:4px;height:4px;background:#fff"></div><div class="a" style="left:2002.8px;top:1027.6px;width:3.9px;height:4px;background:#999"></div><div class="a" style="left:2011.5px;top:1028.4px;width:4px;height:4px;background:#fff"></div><div class="a" style="left:2010.8px;top:1027.6px;width:3.9px;height:4px;background:#999"></div>
<div class="a" style="left:814.2px;top:1062.2px;width:481.9px;height:546.1px;border:2px solid #2b56a6"></div><div class="a" style="left:833.8px;top:1058px;width:186.3px;height:10px;background:#fff"></div><div class="t" style="left:843.2px;top:1050.2px">Search attributes</div><div class="t" style="left:839.4px;top:1097.5px;color:#1e3c88">Signal Source :</div><div class="a" style="left:996.8px;top:1088.2px;width:292.2px;height:43.6px;border:2px solid #c2c2c2;background:#fff;box-shadow:inset 0 2px 4px rgba(0,0,0,.13)"></div><svg class="a" style="left:1262.2px;top:1105.6px" width="15.6" height="11" viewBox="0 0 15.6 11"><path d="M1.900 2.200L7.800 8.300 13.700 2.200" fill="none" stroke="#555" stroke-width="3.400" stroke-linecap="round" stroke-linejoin="round"/></svg><div class="t" style="left:864.8px;top:1149.6px;color:#aaaaaa">ECU Name :</div><div class="a" style="left:996.8px;top:1140.2px;width:292.2px;height:43.6px;border:2px solid #9f9f9f;background:#fff;box-shadow:inset 0 2px 4px rgba(0,0,0,.10)"></div><svg class="a" style="left:1262.2px;top:1157.6px" width="15.6" height="11" viewBox="0 0 15.6 11"><path d="M1.900 2.200L7.800 8.300 13.700 2.200" fill="none" stroke="#c9c9c9" stroke-width="3.400" stroke-linecap="round" stroke-linejoin="round"/></svg><div class="a" style="left:1005px;top:1198.2px;width:26.2px;height:25.8px;border:2px solid #989898;background:linear-gradient(135deg,#c4c8d0,#e8eaee 55%,#fafafa);box-shadow:inset 0 0 0 1.500px #f4f4f4"></div><div class="t" style="left:1037px;top:1199.3px">Search in Assignment</div><div class="g" style="left:1305.8px;top:1040px;width:1888px;height:4.2px;background:#ababab"></div><div class="hdr" style="left:1309.8px;top:1043.8px;width:1879.8px;height:56.3px"></div><div class="g" style="left:1305.8px;top:1040px;width:4.2px;height:578px"></div><div class="g" style="left:3189.6px;top:1040px;width:4.2px;height:578px"></div><div class="g" style="left:1305.8px;top:1100.1px;width:1888px;height:1.9px;background:#a4a4a4"></div><div class="t b" style="left:1310px;width:1497px;top:1059.2px;text-align:center">Add signal</div><div class="t" style="right:82.6px;top:1059.5px">Selected: 0 Filtered: 0 Total: 0</div><div class="a" style="left:1308px;top:1102px;width:1884px;height:446.6px;background:#fff"></div><div class="a" style="left:1308px;top:1102px;width:1851.8px;height:44px;background:#c5c5c5"></div><div class="fin" style="left:1309.85px;top:1104px;width:612.30px;height:40.1px"></div><div class="fin" style="left:1925.85px;top:1104px;width:612.60px;height:40.1px"></div><div class="fin" style="left:2542.15px;top:1104px;width:615.95px;height:40.1px"></div><svg class="a" style="left:3162px;top:1110px" width="28.4" height="29" viewBox="0 0 28.4 29"><defs><linearGradient id="f1110a" x1="0" y1="0" x2="1" y2="0"><stop offset="0" stop-color="#3c3c3c"/><stop offset=".3" stop-color="#8e8e8e"/><stop offset=".62" stop-color="#e8e8e8"/><stop offset=".9" stop-color="#ffffff"/><stop offset="1" stop-color="#9a9a9a"/></linearGradient><linearGradient id="f1110b" x1="0" y1="0" x2="1" y2="0"><stop offset="0" stop-color="#f4f4f4"/><stop offset=".4" stop-color="#e0e0e0"/><stop offset=".62" stop-color="#8a8a8a"/><stop offset=".8" stop-color="#4e4e4e"/><stop offset="1" stop-color="#8a8a8a"/></linearGradient></defs><g style="filter:blur(.7px)"><path d="M1 6.5C3 10 7.500 14 10.200 19.200V27Q14 29 18 27V19.200C21 14 25.500 10 27.400 6.500Z" fill="url(#f1110b)"/><ellipse cx="14.200" cy="5.600" rx="13.600" ry="5.200" fill="url(#f1110a)" stroke="#a0a0a0" stroke-width=".9"/></g></svg><div class="colh" style="left:1308px;top:1146.4px;width:1852.2px;height:45.6px"></div><div class="a" style="left:3160.2px;top:1146.4px;width:29.2px;height:45.4px;background:linear-gradient(#f6f6f6,#e8e8e8);border:1px solid #dcdcdc;box-sizing:border-box"></div><div class="t" style="left:1314.8px;top:1156.5px">Module name</div><div class="a" style="left:1923.8px;top:1146.4px;width:1.6px;height:45.6px;background:#f7f7f7"></div><div class="t" style="left:1930.8px;top:1156.5px">Name</div><div class="a" style="left:2540.1000000000004px;top:1146.4px;width:1.6px;height:45.6px;background:#f7f7f7"></div><div class="t" style="left:2547.1000000000004px;top:1156.5px">Comment</div><svg class="a" style="left:2488.6px;top:1158.6px" width="15.2" height="9" viewBox="0 0 15.2 9"><path d="M7.600 .6L14.600 8.400H.6z" fill="#4b6480" stroke="#4b6480" stroke-width="1" stroke-linejoin="round"/></svg><div class="t" style="left:1310.4px;width:1881.6px;top:1357px;text-align:center">No items to show.</div><div class="g" style="left:1305.8px;top:1548.4px;width:1888px;height:2.8px;background:#ababab"></div><div class="hdr" style="left:1310px;top:1551.2px;width:1879.6px;height:62.6px"></div><div class="g" style="left:1305.8px;top:1613.8px;width:1888px;height:4.2px;background:#aaa"></div><div class="btn" style="left:1815.9px;top:1560.3px;width:198px;height:41.4px"><svg width="22" height="22" viewBox="0 0 22 22" style=""><circle cx="11" cy="11" r="11" fill="#307d02"/><path d="M11 7.200v7.600M7.200 11h7.600" stroke="#fff" stroke-width="2.500" stroke-linecap="round" fill="none"/></svg><span>Add signal</span></div><div class="btn" style="left:2026px;top:1560.3px;width:198px;height:41.4px"><svg width="19" height="19" viewBox="0 0 19 19"><rect x="1.300" y="1.300" width="16.400" height="16.400" rx="2.300" fill="none" stroke="#000" stroke-width="2"/><path d="M6.300 9.600h6.600" stroke="#000" stroke-width="2" stroke-linecap="round"/></svg><span>Hide</span></div><div class="btn dis" style="left:2236.2px;top:1560.3px;width:197.6px;height:41.4px"><svg width="22" height="22" viewBox="0 0 22 22" style=""><circle cx="11" cy="11" r="11" fill="#ababab"/><circle cx="11" cy="6.900" r="1.700" fill="#fff"/><path d="M8.400 9.900h4.500v5h1.300v1.600H8.200v-1.600h1.900v-3.400H8.400z" fill="#fff"/></svg><span>More info</span></div><div class="a" style="left:2887.7px;top:1566.5px;width:2.5px;height:31.6px;background:#bdbdbd"></div><svg class="a" style="left:2915.8px;top:1569.8px" width="34.6" height="22.9" viewBox="0 0 34.6 22.9"><path d="M1.800 2.900V20M32.800 2.900V20" stroke="#000" stroke-width="3.500" stroke-linecap="round" fill="none"/><path d="M8 11.400H26.600M13.600 5.400L7.600 11.400l6 6M21 5.400l6 6-6 6" stroke="#000" stroke-width="3.300" stroke-linecap="round" stroke-linejoin="round" fill="none"/></svg><div class="a" style="left:2969.7px;top:1566.5px;width:2.5px;height:31.6px;background:#bdbdbd"></div><svg class="a" style="left:2994.1px;top:1569.1px" width="27.8" height="24.2" viewBox="0 0 27.8 24.2"><path fill-rule="evenodd" d="M3.400 0H24.400a3.400 3.400 0 0 1 3.400 3.400V20.800a3.400 3.400 0 0 1-3.400 3.400H3.400A3.400 3.400 0 0 1 0 20.800V3.400A3.400 3.400 0 0 1 3.400 0zM3.400 6.800V20.800H11.900V6.800zM15.900 6.800V20.800H24.400V6.800z" fill="#000"/></svg><svg class="a" style="left:3062.2px;top:1568.2px" width="27.8" height="24.2" viewBox="0 0 27.8 24.2"><path fill-rule="evenodd" d="M3.400 0H24.400a3.400 3.400 0 0 1 3.400 3.400V20.800a3.400 3.400 0 0 1-3.400 3.400H3.400A3.400 3.400 0 0 1 0 20.800V3.400A3.400 3.400 0 0 1 3.400 0zM3.400 6.800V20.800H11.900V6.800zM15.900 6.800V20.800H24.400V6.800z" fill="#000"/><circle cx="23.600" cy="22.800" r="10.900" fill="#307d02"/><path d="M23.600 15.200V30.400M15.400 22.800H31.800" stroke="#0b1503" stroke-width="3" stroke-linecap="round" fill="none"/></svg><div class="a" style="left:3123.7px;top:1566.5px;width:2.5px;height:31.6px;background:#bdbdbd"></div><svg class="a" style="left:3149.9px;top:1569.2px" width="27.6" height="24.3" viewBox="0 0 27.6 24.3"><path d="M12.200 2.300a3.300 3.300 0 0 1 4.700 0l8.200 8.200a3.300 3.300 0 0 1 0 4.700L17.800 22.500H25.800" fill="none" stroke="#000" stroke-width="3.300" stroke-linecap="round" stroke-linejoin="round"/><path d="M12.200 2.300L2.400 12.100a3.300 3.300 0 0 0 0 4.700L8.100 22.500H17.800" fill="none" stroke="#000" stroke-width="3.300" stroke-linecap="round" stroke-linejoin="round"/><path d="M8.200 6.300L12.200 2.300a3.300 3.300 0 0 1 4.700 0l8.200 8.200a3.300 3.300 0 0 1 0 4.700L20.400 19.500z" fill="#000"/></svg><div class="g" style="left:20.3px;top:1680px;width:3237.8px;height:4.6px;background:linear-gradient(#c8c8c8,#ababab 45%,#b4b4b4)"></div><div class="hdr" style="left:22.8px;top:1684.4px;width:3233px;height:63.4px"></div><div class="g" style="left:20.3px;top:1680px;width:2.6px;height:70px;background:#acacac"></div><div class="g" style="left:20.3px;top:1747.7px;width:3237.8px;height:2.400px;background:#aaa"></div><div class="btn" style="left:23.9px;top:1694.2px;width:198.3px;height:41.4px"><svg width="22" height="22" viewBox="0 0 22 22" style=""><circle cx="11" cy="11" r="11" fill="#ea3b18"/><path d="M8.100 8.300l5.400 5.400M13.500 8.300l-5.400 5.400" stroke="#fff" stroke-width="2" stroke-linecap="round" fill="none"/></svg><span>Close</span></div><div class="t" style="left:1415.2px;top:1702.9px"><b>Mode:</b> Create</div><div class="btn" style="left:2744px;top:1694.2px;width:198px;height:41.4px"><svg width="16" height="22.4" viewBox="0 0 16.8 22.5" preserveAspectRatio="none" style="position:relative;top:-.45px"><path d="M2.500 0H10.300V4.600a2 2 0 0 0 2 2H16.800V20a2.500 2.500 0 0 1-2.500 2.500H2.500A2.500 2.500 0 0 1 0 20V2.500A2.500 2.500 0 0 1 2.500 0z" fill="#2f7d06"/><path d="M11.700 .2L16.600 5.100H12.400a.7.700 0 0 1-.7-.7z" fill="#2f7d06"/></svg><span>Save</span></div><div class="btn" style="left:2954.1px;top:1694.2px;width:297.8px;height:41.4px"><svg width="25.4" height="22.4" viewBox="0 0 25.4 22.5" preserveAspectRatio="none" style="position:relative;top:-.45px"><g transform="scale(.955 1)"><path d="M2.500 0H10.300V4.600a2 2 0 0 0 2 2H16.800V20a2.500 2.500 0 0 1-2.500 2.500H2.500A2.500 2.500 0 0 1 0 20V2.500A2.500 2.500 0 0 1 2.500 0z" fill="#2f7d06"/><path d="M11.700 .2L16.600 5.100H12.400a.7.700 0 0 1-.7-.7z" fill="#2f7d06"/></g><path d="M8.500 13.900H23.700M20.300 10.100l3.800 3.800-3.800 3.800" fill="none" stroke="#2f7d06" stroke-width="1.900" stroke-linecap="round" stroke-linejoin="round"/><path d="M8.200 13.900H16.600" stroke="#efefef" stroke-width="1.900" fill="none"/></svg><span>Save and Close</span></div>
</body></html>
